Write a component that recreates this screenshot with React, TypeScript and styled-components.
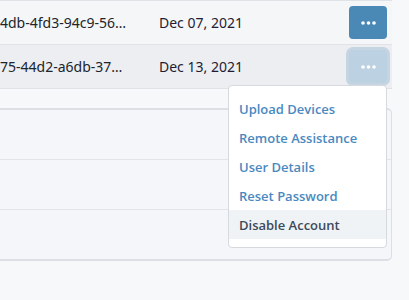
import React from "react";
import styled, { createGlobalStyle } from "styled-components";

const GlobalStyle = createGlobalStyle`
  html, body {
    margin: 0;
    padding: 0;
    background: #f7f8fa;
    font-family: "Noto Sans", "Open Sans", sans-serif;
    color: #212529;
  }
  * { box-sizing: border-box; }
`;

const Page = styled.div`
  width: 409px;
  height: 300px;
  overflow: hidden;
  background: #f7f8fa;
`;

const Table = styled.div`
  width: 392px;
  border-top: 1px solid #dfe2e6;
`;

const Row = styled.div<{ $hover?: boolean }>`
  display: grid;
  grid-template-columns: 159px 1fr auto;
  align-items: center;
  height: 44px;
  border-bottom: 1px solid #dfe2e6;
  background: ${(p) => (p.$hover ? "#eceef2" : "#f5f6f8")};
  font-size: 14px;
`;

const IdCell = styled.div`
  white-space: nowrap;
  overflow: hidden;
  color: #212529;
`;

const DateCell = styled.div`
  white-space: nowrap;
  color: #231d33;
`;

const ActionCell = styled.div`
  position: relative;
  padding-right: 5px;
  display: flex;
  justify-content: flex-end;
`;

const MenuButton = styled.button<{ $open?: boolean }>`
  width: 38px;
  height: 33px;
  border: none;
  border-radius: 4px;
  padding: 0;
  display: flex;
  align-items: center;
  justify-content: center;
  cursor: pointer;
  background: ${(p) => (p.$open ? "#bcd1e2" : "#4a88b6")};
  box-shadow: ${(p) => (p.$open ? "0 0 0 3px #c6d5e2" : "none")};
`;

const Menu = styled.div`
  position: absolute;
  top: calc(100% + 2px);
  right: 5px;
  width: 159px;
  padding: 8px 0;
  background: #ffffff;
  border: 1px solid #d6d9de;
  border-radius: 4px;
  z-index: 10;
`;

const MenuItem = styled.div<{ $active?: boolean }>`
  height: 29px;
  display: flex;
  align-items: center;
  padding: 1px 10px 0;
  font-family: "Open Sans", "Noto Sans", sans-serif;
  font-size: 13px;
  font-weight: 600;
  white-space: nowrap;
  color: ${(p) => (p.$active ? "#3d4a5b" : "#4a89c0")};
  background: ${(p) => (p.$active ? "#f0f3f6" : "transparent")};
`;

const Card = styled.div`
  margin-top: 19px;
  margin-left: -10px;
  width: 402px;
  border: 1px solid #dcdfe4;
  border-top-width: 2px;
  border-bottom-width: 2px;
  border-radius: 5px;
  background: #f5f6f9;
`;

const CardRow = styled.div`
  height: 50px;
  border-bottom: 1px solid #e2e4e8;
  &:last-child {
    border-bottom: none;
    height: 49px;
  }
`;

const Dots = () => (
  <svg width="15" height="4" viewBox="0 0 15 4" fill="#ffffff">
    <circle cx="2" cy="2" r="1.8" />
    <circle cx="7.5" cy="2" r="1.8" />
    <circle cx="13" cy="2" r="1.8" />
  </svg>
);

const items = [
  "Upload Devices",
  "Remote Assistance",
  "User Details",
  "Reset Password",
  "Disable Account",
];

export default function App() {
  return (
    <Page>
      <GlobalStyle />
      <Table>
        <Row>
          <IdCell>4db-4fd3-94c9-56…</IdCell>
          <DateCell>Dec 07, 2021</DateCell>
          <ActionCell>
            <MenuButton aria-label="Actions">
              <Dots />
            </MenuButton>
          </ActionCell>
        </Row>
        <Row $hover>
          <IdCell>75-44d2-a6db-37…</IdCell>
          <DateCell>Dec 13, 2021</DateCell>
          <ActionCell>
            <MenuButton $open aria-label="Actions">
              <Dots />
            </MenuButton>
            <Menu>
              {items.map((it, i) => (
                <MenuItem key={it} $active={i === items.length - 1}>
                  {it}
                </MenuItem>
              ))}
            </Menu>
          </ActionCell>
        </Row>
      </Table>
      <Card>
        <CardRow />
        <CardRow />
        <CardRow />
      </Card>
    </Page>
  );
}
